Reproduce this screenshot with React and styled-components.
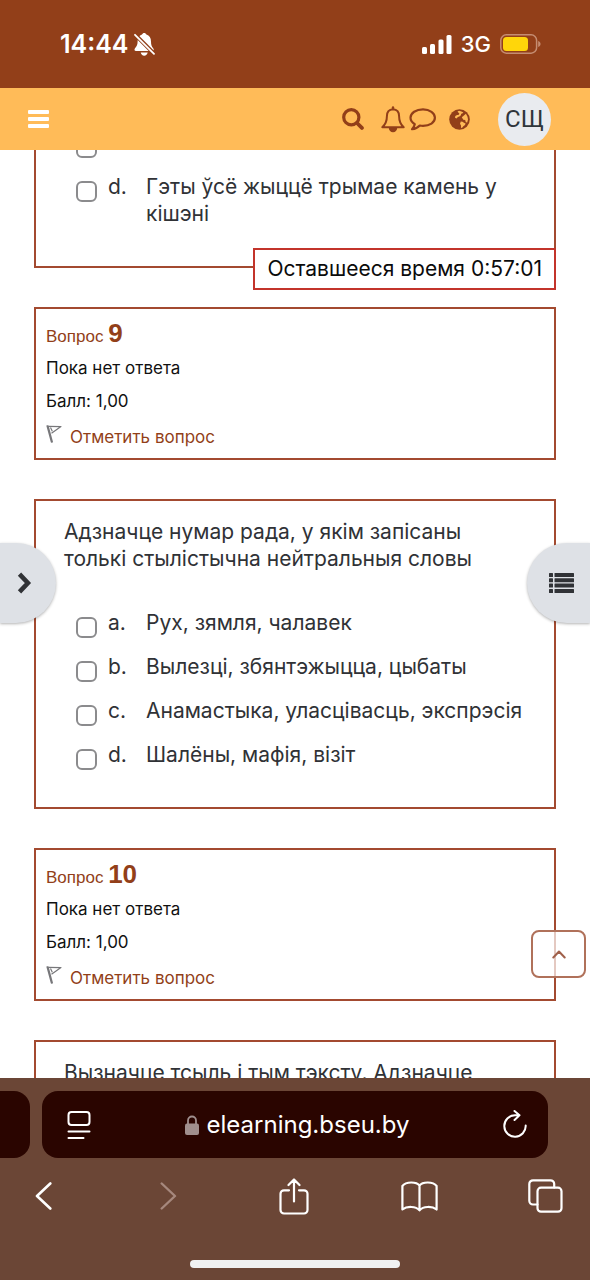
import React from "react";
import styled, { createGlobalStyle } from "styled-components";

const c = {
  brand: "#923f19",
  line: "#a34a30",
  nav: "#ffbb58",
  ink: "#303236",
  drawer: "#dee1e6",
  timer: "#c3342b",
  chrome: "#6b4636",
  field: "#2a0500",
};

const GlobalStyle = createGlobalStyle`
  *, *::before, *::after { box-sizing: border-box; }
  body {
    margin: 0;
    background: #fff;
    color: ${c.ink};
    font-family: Inter, "Noto Sans", sans-serif;
    font-size: 21px;
    line-height: 27px;
  }
  button { font: inherit; color: inherit; margin: 0; padding: 0; border: 0; background: none; }
  svg { display: block; flex: none; }
  p, h3 { margin: 0; font-weight: 400; }
`;

const Screen = styled.div`
  display: flex;
  flex-direction: column;
  height: 100vh;
  overflow: hidden;
`;

const StatusBar = styled.header`
  display: flex;
  align-items: center;
  justify-content: space-between;
  flex: none;
  height: 88px;
  padding: 0 49px 0 60px;
  background: ${c.brand};
  color: #fff;
`;

const StatusGroup = styled.div`
  display: flex;
  align-items: center;
  gap: ${(p) => p.$gap}px;
`;

const Clock = styled.span`
  font-size: 25px;
  font-weight: 600;
`;

const Network = styled.span`
  font-size: 22px;
  font-weight: 500;
`;

const NavBar = styled.nav`
  display: flex;
  align-items: center;
  justify-content: space-between;
  flex: none;
  height: 62px;
  padding: 0 39px 0 28px;
  background: ${c.nav};
  color: ${c.brand};
`;

const NavActions = styled.div`
  display: flex;
  align-items: center;
`;

const NavButton = styled.button`
  display: flex;
  margin-right: ${(p) => p.$after || 0}px;
`;

const Avatar = styled.button`
  width: 53px;
  height: 53px;
  border-radius: 50%;
  background: #e9ebef;
  color: #2f353b;
  font-family: Roboto, sans-serif;
  font-size: 24px;
`;

const Main = styled.main`
  position: relative;
  flex: 1;
  min-height: 0;
  overflow: hidden;
`;

const Quiz = styled.div`
  display: flex;
  flex-direction: column;
  gap: 39px;
  margin-top: -40px;
  padding: 0 34px;
`;

const Card = styled.section`
  border: 2px solid ${c.line};
  background: #fff;
`;

const QuestionCard = styled(Card)`
  padding: 17px 28px 39px;
`;

const Stem = styled.p`
  margin-bottom: 37px;
`;

const Options = styled.div`
  display: flex;
  flex-direction: column;
  gap: 17px;
  padding-left: 12px;
`;

const Option = styled.label`
  display: grid;
  grid-template-columns: 32px 38px 1fr;
  align-items: start;
  min-height: 27px;
`;

const Tick = styled.input`
  appearance: none;
  width: 21px;
  height: 21px;
  margin: 8px 0 -2px;
  border: 2px solid #8b8b8d;
  border-radius: 6px;
  background: #fff;
`;

const InfoCard = styled(Card)`
  display: flex;
  flex-direction: column;
  gap: 9px;
  padding: 17px 10px 9px;
  color: #111;
  font-size: 17px;
  line-height: 24px;
`;

const Number = styled.h3`
  color: ${c.brand};
  font-family: "Liberation Sans", Arial, sans-serif;
  font-size: 17px;
  line-height: 21px;

  b {
    font-size: 26px;
    line-height: 0;
  }
`;

const FlagLink = styled.a`
  display: flex;
  gap: 8px;
  margin-top: 3px;
  color: ${c.brand};
  text-decoration: none;
`;

const Timer = styled.div`
  position: absolute;
  top: 98px;
  right: 34px;
  padding: 6px 12px;
  border: 2px solid ${c.timer};
  background: #fff;
  color: #0b0b0b;
  line-height: 26px;
`;

const DrawerToggle = styled.button`
  position: absolute;
  top: 393px;
  ${(p) => (p.$side === "left" ? "left: 0" : "right: 0")};
  display: flex;
  align-items: center;
  width: ${(p) => (p.$side === "left" ? 56 : 63)}px;
  height: 80px;
  padding-left: ${(p) => (p.$side === "left" ? 17 : 22)}px;
  border-radius: ${(p) => (p.$side === "left" ? "0 40px 40px 0" : "40px 0 0 40px")};
  background: ${c.drawer};
  box-shadow: 0 1px 3px rgba(0, 0, 0, 0.3);
`;

const ToTop = styled.button`
  position: absolute;
  right: 4px;
  bottom: 100px;
  display: flex;
  align-items: center;
  justify-content: center;
  width: 55px;
  height: 48px;
  border: 2px solid #b0715a;
  border-radius: 8px;
  background: rgba(255, 255, 255, 0.7);
`;

const Browser = styled.footer`
  display: flex;
  flex-direction: column;
  flex: none;
  height: 202px;
  padding-top: 13px;
  background: ${c.chrome};
  color: #fff;
`;

const Tabs = styled.div`
  display: flex;
  gap: 12px;
  height: 67px;
  padding-right: 42px;
`;

const PreviousTab = styled.button`
  width: 30px;
  border-radius: 0 16px 16px 0;
  background: ${c.field};
`;

const AddressBar = styled.div`
  display: flex;
  align-items: center;
  justify-content: space-between;
  flex: 1;
  padding: 0 13px 0 17px;
  border-radius: 16px;
  background: ${c.field};
`;

const Address = styled.button`
  display: flex;
  align-items: center;
  gap: 8px;
  font-size: 24px;
`;

const Tools = styled.div`
  display: flex;
  justify-content: space-between;
  padding: 18px 25px 0 23px;
`;

const Tool = styled.button`
  display: flex;
  align-items: center;
  justify-content: center;
  width: 40px;
  height: 40px;
`;

const HomeIndicator = styled.div`
  width: 210px;
  height: 8px;
  margin: auto auto 12px;
  border-radius: 4px;
  background: #f1f1f1;
`;

const stroke = { fill: "none", stroke: "currentColor", strokeLinecap: "round", strokeLinejoin: "round" };

const SilentIcon = () => (
  <svg width="21" height="23" viewBox="0 0 21 23">
    <path fill="currentColor" d="M10.2 0c1 0 1.800.6 2.200 1.600 3 1 4.600 3.400 4.600 6.900 0 3.300.7 5 2.200 6.700 1 1.200.6 2.800-.9 2.800H2C.5 18 0 16.500 1 15.200c1.800-2.200 2.600-3.700 2.600-6.700 0-3.500 1.500-5.900 4.400-6.900C8.400.6 9.200 0 10.200 0ZM6.700 19.500h7c-.4 2-1.700 3.200-3.500 3.200s-3.100-1.200-3.500-3.200Z" />
    <path fill="none" stroke={c.brand} strokeWidth="4" d="m0 .5 21 21" />
    <path {...stroke} strokeWidth="1.8" d="m1 1.800 19 19" />
  </svg>
);

const SignalIcon = () => (
  <svg width="30" height="19" viewBox="0 0 30 19" fill="currentColor">
    <rect x="0" y="12" width="5" height="7" rx="1.5" />
    <rect x="8" y="9" width="5" height="10" rx="1.5" />
    <rect x="16.5" y="4.5" width="5" height="14.5" rx="1.5" />
    <rect x="24.5" y="0" width="5" height="19" rx="1.5" />
  </svg>
);

const BatteryIcon = () => (
  <svg width="41" height="20" viewBox="0 0 41 20">
    <rect x=".8" y=".8" width="35.8" height="18.4" rx="5.5" fill="none" stroke="#c58d72" strokeWidth="1.5" />
    <rect x="3" y="3" width="25" height="14" rx="3.5" fill="#ffd60a" />
    <path d="M38.200 7c1.500.6 2.300 1.600 2.300 3s-.8 2.400-2.300 3Z" fill="#c58d72" />
  </svg>
);

const MenuIcon = () => (
  <svg width="21" height="18" viewBox="0 0 21 18" fill="#fff">
    <rect width="21" height="4" rx="1" />
    <rect y="7" width="21" height="4" rx="1" />
    <rect y="14" width="21" height="4" rx="1" />
  </svg>
);

const SearchIcon = () => (
  <svg width="22" height="22" viewBox="0 0 22 22" {...stroke}>
    <circle cx="9.3" cy="9.3" r="7.6" strokeWidth="3.2" />
    <path d="m15 15 4.900 4.900" strokeWidth="3.8" />
  </svg>
);

const BellIcon = () => (
  <svg width="24" height="27" viewBox="0 0 24 27" {...stroke}>
    <path strokeWidth="2" d="M12 3.200c-4.200.2-6.100 3-6.100 7 0 5-1.300 8.100-4.600 11h21.400c-3.300-2.900-4.600-6-4.600-11 0-4-1.900-6.800-6.100-7Z" />
    <path strokeWidth="2.4" d="M12 1.400v1.400" />
    <path fill="currentColor" stroke="none" d="M7.800 22h8.400c-.1 2.600-1.900 4.300-4.200 4.300S7.900 24.600 7.800 22Z" />
  </svg>
);

const CommentIcon = () => (
  <svg width="27" height="23" viewBox="0 0 27 23" {...stroke}>
    <path strokeWidth="2.2" d="M14 1.300C7 1.300 1.500 5 1.500 9.800c0 2.700 1.700 4.900 4.300 6.400-.3 2-1.300 3.500-2.800 5 3.500-.3 6-1.700 7.800-3.700 1 .2 2.100.3 3.200.3 6.800 0 11.900-3.300 11.900-8S20.800 1.300 14 1.300Z" />
  </svg>
);

const GlobeIcon = () => (
  <svg width="21" height="21" viewBox="0 0 21 21">
    <circle cx="10.5" cy="10.5" r="10.3" fill="currentColor" />
    <g fill={c.nav}>
      <path d="m8.500 2.600 1.600-.9 2.300.7 2 1.200-1.200 1-1 .1-.3 1.600-1.500 1.300-1.500.4-1.400 1.400-1.500-.6.300-1.800 1.800-1 1.300.1 1-1.300Z" />
      <path d="m12.800 8.200 2.100-1.700 2-1.700 1.600 3 .5 2.600-.8 3.200-1.400-.4-.6-2.200-1.900-.2Z" />
      <path d="m11.800 12.600 1.800.1 1.300 1 1.700.7-.6 1.700-1.700 1.200-1.200 1.400-1 .2-.1-2.400-1-1.700Z" />
    </g>
  </svg>
);

const FlagIcon = () => (
  <svg width="16" height="18" viewBox="0 0 16 18" fill="none" stroke="#77777a" strokeWidth="1.2" strokeLinejoin="round">
    <path d="M1 .8 5.400 17.200l1-.3L2.100.8Z" />
    <path d="M2.300 1.300 15 1.600 5.500 8.300M4.500 2.600l1.800 3.600" />
  </svg>
);

const DrawerArrow = () => (
  <svg width="15" height="22" viewBox="0 0 15 22" fill="none" stroke={c.ink} strokeWidth="4.6">
    <path d="m2.500 2.200 8.400 8.800-8.400 8.800" />
  </svg>
);

const ListIcon = () => (
  <svg width="25" height="20" viewBox="0 0 25 20" fill={c.ink}>
    {[0, 5.3, 10.6, 16].map((y) => (
      <React.Fragment key={y}>
        <rect y={y} width="4" height="4" rx=".5" />
        <rect x="5.5" y={y} width="19.5" height="4" rx=".5" />
      </React.Fragment>
    ))}
  </svg>
);

const UpIcon = () => (
  <svg width="14" height="9" viewBox="0 0 14 9" {...stroke} stroke="#a0604a" strokeWidth="2">
    <path d="m1.300 7.500 5.700-6 5.700 6" />
  </svg>
);

const ReaderIcon = () => (
  <svg width="24" height="28" viewBox="0 0 24 28" {...stroke} strokeWidth="2">
    <rect x="1.5" y="1" width="21" height="13" rx="3" />
    <path d="M1.500 20.500h21M1.500 27h15" />
  </svg>
);

const LockIcon = () => (
  <svg width="14" height="20" viewBox="0 0 14 20">
    <rect y="8.5" width="14" height="11.5" rx="2" fill="#a08f8d" />
    <path d="M3 9V5.500a4 4 0 0 1 8 0V9" fill="none" stroke="#a08f8d" strokeWidth="1.8" />
  </svg>
);

const ReloadIcon = () => (
  <svg width="26" height="30" viewBox="0 0 26 30" {...stroke} strokeWidth="2">
    <path d="M23.700 15.500a10.700 10.700 0 1 1-10.700-10.200h4.500M12.500 1l5 4.300-5 4.700" />
  </svg>
);

const BackIcon = () => (
  <svg width="17" height="28" viewBox="0 0 17 28" {...stroke} strokeWidth="2.6">
    <path d="M15.300 1.500 2 14l13.300 12.500" />
  </svg>
);

const ForwardIcon = () => (
  <svg width="17" height="28" viewBox="0 0 17 28" {...stroke} stroke="#a6887d" strokeWidth="2.4">
    <path d="M1.700 1.500 15 14 1.700 26.500" />
  </svg>
);

const ShareIcon = () => (
  <svg width="30" height="37" viewBox="0 0 30 37" {...stroke} strokeWidth="2.2">
    <path d="M10 12.300H5a3.500 3.500 0 0 0-3.500 3.500V32A3.500 3.500 0 0 0 5 35.500h20a3.500 3.500 0 0 0 3.500-3.500V15.800a3.500 3.500 0 0 0-3.500-3.500h-5M15 23.500V1.700M9.500 7 15 1.500 20.500 7" />
  </svg>
);

const BookIcon = () => (
  <svg width="37" height="31" viewBox="0 0 37 31" {...stroke} strokeWidth="2.2">
    <path d="M18.500 4.500C15.500.5 5 .3 1.400 5v23.500c4.500-3.600 13.500-3.400 17.100.8 3.600-4.200 12.600-4.400 17.100-.8V5C32 .3 21.500.5 18.500 4.500ZM18.500 4.500v24" />
  </svg>
);

const TabsIcon = () => (
  <svg width="35" height="34" viewBox="0 0 35 34" {...stroke} strokeWidth="2.2">
    <rect x="9.5" y="8.7" width="24" height="24" rx="3.5" />
    <path d="M9.500 25.500H5A3.700 3.700 0 0 1 1.300 21.800V5A3.700 3.700 0 0 1 5 1.300h17.500A3.700 3.700 0 0 1 26.200 5v3.500" />
  </svg>
);

const Choice = ({ letter, children }) => (
  <Option>
    <Tick type="checkbox" aria-label={children ? undefined : "c"} />
    <span>{letter}</span>
    <span>{children}</span>
  </Option>
);

const Info = ({ number }) => (
  <InfoCard>
    <Number>Вопрос <b>{number}</b></Number>
    <p>Пока нет ответа</p>
    <p>Балл: 1,00</p>
    <FlagLink href="#flag">
      <FlagIcon />
      Отметить вопрос
    </FlagLink>
  </InfoCard>
);

export default function App() {
  return (
    <Screen>
      <GlobalStyle />
      <StatusBar>
        <StatusGroup $gap={5}>
          <Clock>14:44</Clock>
          <SilentIcon />
        </StatusGroup>
        <StatusGroup $gap={9}>
          <SignalIcon />
          <Network>3G</Network>
          <BatteryIcon />
        </StatusGroup>
      </StatusBar>

      <NavBar>
        <NavButton aria-label="Меню"><MenuIcon /></NavButton>
        <NavActions>
          <NavButton $after={17} aria-label="Поиск"><SearchIcon /></NavButton>
          <NavButton $after={4} aria-label="Уведомления"><BellIcon /></NavButton>
          <NavButton $after={13} aria-label="Сообщения"><CommentIcon /></NavButton>
          <NavButton $after={28} aria-label="Язык"><GlobeIcon /></NavButton>
          <Avatar>СЩ</Avatar>
        </NavActions>
      </NavBar>

      <Main>
        <Quiz>
          <QuestionCard>
            <Options>
              <Choice />
              <Choice letter="d.">Гэты ўсё жыццё трымае камень у кішэні</Choice>
            </Options>
          </QuestionCard>
          <Info number="9" />
          <QuestionCard>
            <Stem>Адзначце нумар рада, у якім запісаны толькі стылістычна нейтральныя словы</Stem>
            <Options>
              <Choice letter="a.">Рух, зямля, чалавек</Choice>
              <Choice letter="b.">Вылезці, збянтэжыцца, цыбаты</Choice>
              <Choice letter="c.">Анамастыка, уласцівасць, экспрэсія</Choice>
              <Choice letter="d.">Шалёны, мафія, візіт</Choice>
            </Options>
          </QuestionCard>
          <Info number="10" />
          <QuestionCard>
            <Stem>Вызначце тсыль і тым тэксту. Адзначце</Stem>
          </QuestionCard>
        </Quiz>
        <Timer>Оставшееся время 0:57:01</Timer>
        <DrawerToggle $side="left" aria-label="Открыть панель"><DrawerArrow /></DrawerToggle>
        <DrawerToggle $side="right" aria-label="Открыть навигацию"><ListIcon /></DrawerToggle>
        <ToTop aria-label="Наверх"><UpIcon /></ToTop>
      </Main>

      <Browser>
        <Tabs>
          <PreviousTab aria-label="Предыдущая вкладка" />
          <AddressBar>
            <Tool aria-label="Вид страницы"><ReaderIcon /></Tool>
            <Address><LockIcon />elearning.bseu.by</Address>
            <Tool aria-label="Обновить"><ReloadIcon /></Tool>
          </AddressBar>
        </Tabs>
        <Tools>
          <Tool aria-label="Назад"><BackIcon /></Tool>
          <Tool aria-label="Вперёд"><ForwardIcon /></Tool>
          <Tool aria-label="Поделиться"><ShareIcon /></Tool>
          <Tool aria-label="Закладки"><BookIcon /></Tool>
          <Tool aria-label="Вкладки"><TabsIcon /></Tool>
        </Tools>
        <HomeIndicator />
      </Browser>
    </Screen>
  );
}
